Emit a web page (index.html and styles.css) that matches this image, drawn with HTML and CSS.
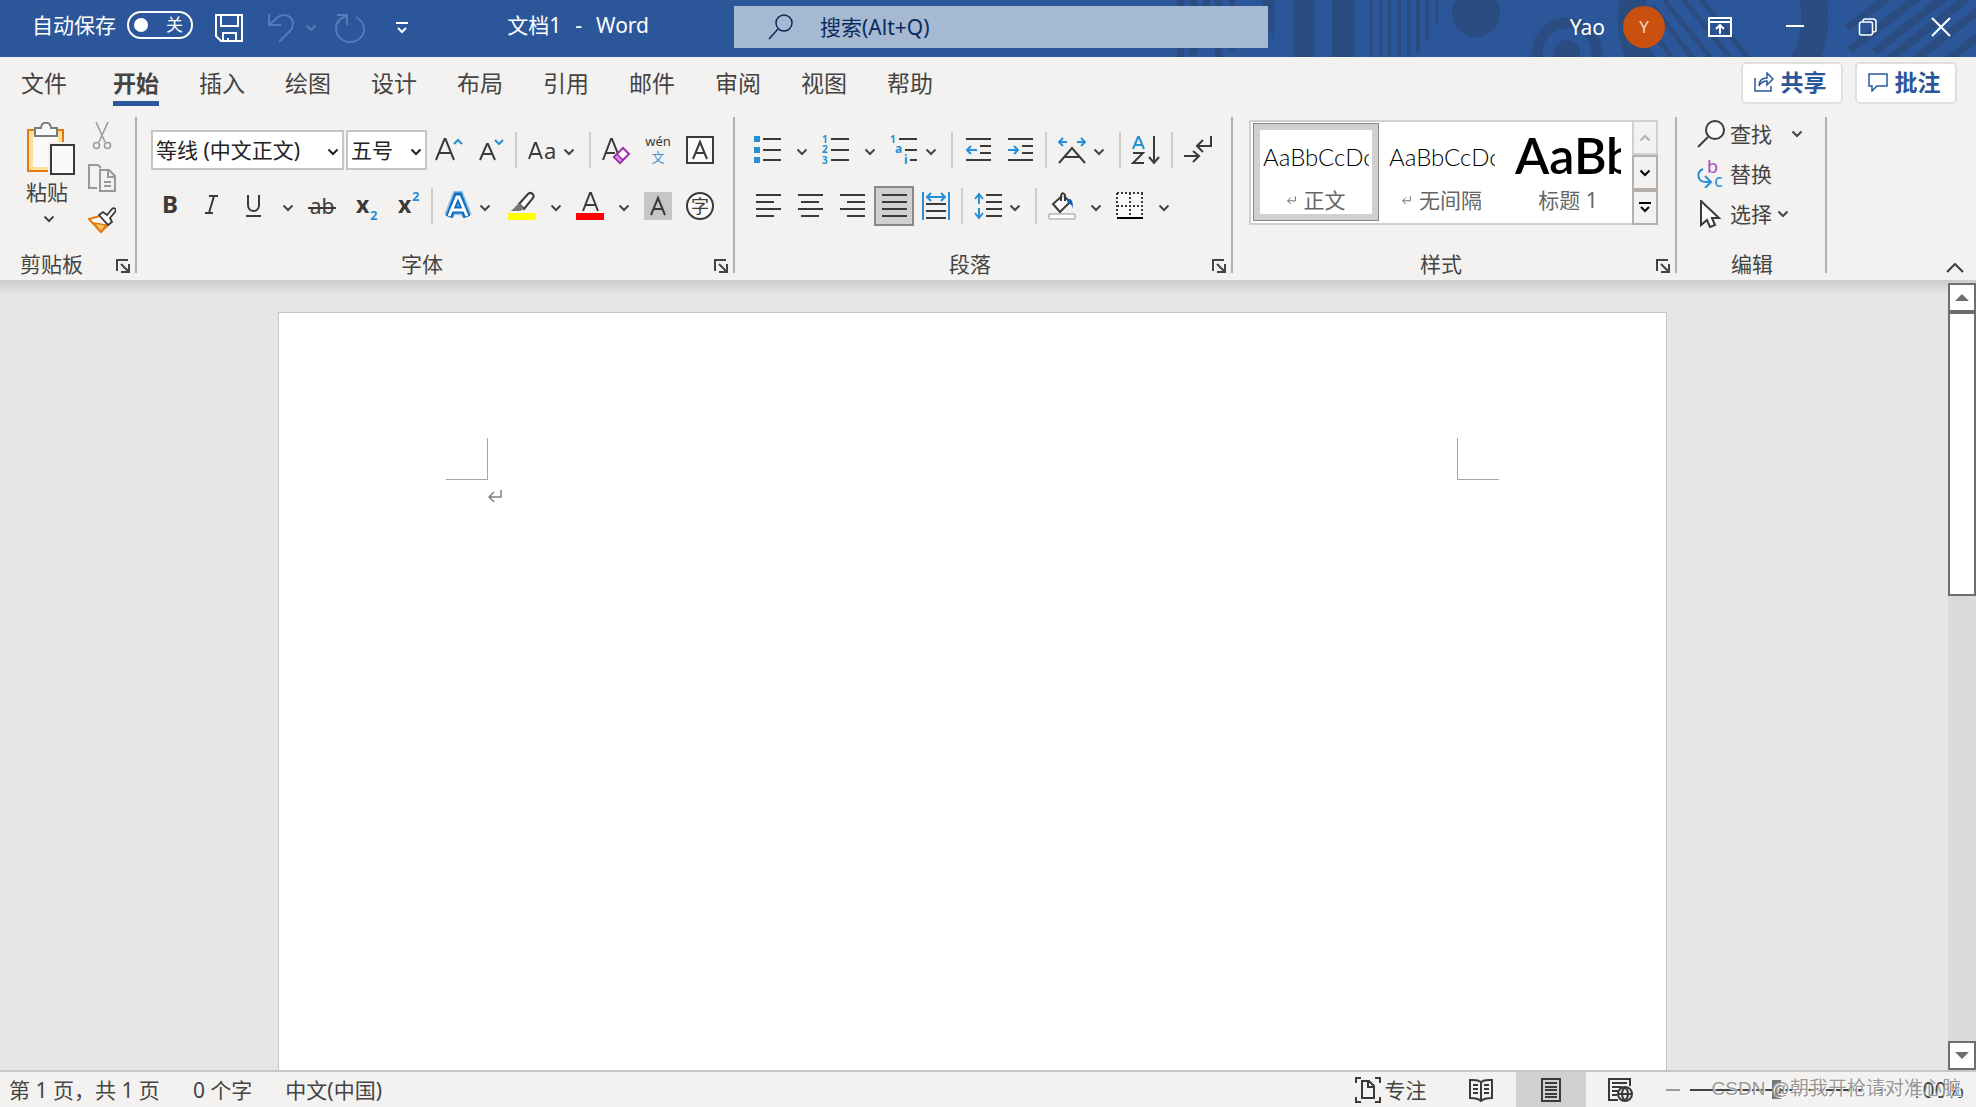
FILE: index.html
```html
<!DOCTYPE html>
<html lang="zh-CN">
<head>
    <meta charset="utf-8">
    <title>文档1 - Word</title>
    <link rel="stylesheet" href="styles.css">
</head>
<body>
    <!-- Shared symbols -->
    <svg class="symbols" aria-hidden="true">
        <symbol id="chevron" viewBox="0 0 12 8"><path d="M1.5 1.5L6 6l4.500-4.500" fill="none" stroke="currentColor" stroke-width="2"/></symbol>
        <symbol id="launcher" viewBox="0 0 14 14"><path d="M1 12V1h11M5 5l7 7M13 5v8H5" fill="none" stroke="currentColor" stroke-width="2"/></symbol>
        <symbol id="return" viewBox="0 0 14 13"><path d="M13 0v7H1M6 2L1 7l5 5" fill="none" stroke="currentColor" stroke-width="1.500"/></symbol>
    </svg>

    <header class="titlebar">
        <svg class="pattern" viewBox="1176 0 800 57" aria-hidden="true">
            <path d="M1177 0h7v57h-7zM1190 0h7v55h-7zM1203 0h7v48h-7zM1215 0h7v57h-7zM1229 0h6v50h-6zM1262 0h12v40l-12-24zM1293 0h21v57h-21zM1332 0h22v57h-22z"/>
            <path d="M1370 0h3v57h-3zM1379 0h3v57h-3zM1388 0h3v57h-3zM1398 0h3v57h-3zM1407 0h3v57h-3zM1416 0h4v52l-4 2zM1425 0h4v39l-4 3zM1435 0h3v23l-3 3z"/>
            <circle cx="1476" cy="13" r="24"/>
            <g fill="none" stroke="#2a4c80">
                <circle cx="1567" cy="53" r="30" stroke-width="11"/>
                <circle cx="1723" cy="18" r="92" stroke-width="27"/>
                <path d="M1640 16l36 46M1652 6l44 56M1664 0l50 62M1682-2l50 62M1700-2l50 62" stroke-width="5"/>
                <path d="M1895-8l-48 36M1922-6l-72 56M1946-4l-72 56M1972-6l-84 66M1990 2l-76 58M1992 26l-44 34" stroke-width="8"/>
            </g>
            <circle cx="1567" cy="53" r="13"/>
        </svg>
        <div class="quick">
            <span>自动保存</span>
            <button class="toggle" aria-label="自动保存"><i></i><span>关</span></button>
            <button class="bare save" aria-label="保存"><svg width="28" height="28" viewBox="0 0 28 28"><path d="M1 1h26v26H6l-5-5zM6 1v11h17V1M8 27v-8h13v8M13 27v-3" fill="none" stroke="#fff" stroke-width="2"/></svg></button>
            <button class="bare faded undo" aria-label="撤消"><svg width="28" height="30" viewBox="0 0 28 30"><path d="M2 1v11h12M2 12L11 4c5-4 14-2 15 6 0 5-2 7-5 10l-9 9" fill="none" stroke="currentColor" stroke-width="2"/></svg><svg width="12" height="8"><use href="#chevron"/></svg></button>
            <button class="bare faded redo" aria-label="恢复"><svg width="30" height="30" viewBox="0 0 30 30"><path d="M2 2h10v10M12 3C4 5 1 10 1 16c0 7 6 13 14 13s14-6 14-13c0-5-3-9-8-12" fill="none" stroke="currentColor" stroke-width="2"/></svg></button>
            <button class="bare" aria-label="自定义快速访问工具栏"><svg width="14" height="12" viewBox="0 0 14 12"><path d="M1 1h12M3 6l4 4 4-4" fill="none" stroke="#fff" stroke-width="2"/></svg></button>
            <h1><span>文档1</span><span>-</span><span>Word</span></h1>
        </div>
        <label class="search">
            <svg width="26" height="26" viewBox="0 0 26 26"><circle cx="16" cy="9" r="8" fill="none" stroke="#0b2a5c" stroke-width="1.500"/><path d="M10 15L1 25" stroke="#0b2a5c" stroke-width="1.500"/></svg>
            <input type="text" placeholder="搜索(Alt+Q)" aria-label="搜索">
        </label>
        <div class="account">
            <span>Yao</span>
            <button class="avatar" aria-label="帐户">Y</button>
            <button class="bare" aria-label="功能区显示选项"><svg width="24" height="20" viewBox="0 0 24 20"><path d="M1 1h22v18H1zM1 5h22M12 17V8M8 12l4-4 4 4" fill="none" stroke="#fff" stroke-width="2"/></svg></button>
            <button class="bare" aria-label="最小化"><svg width="20" height="20" viewBox="0 0 20 20"><path d="M1 9h18" stroke="#fff" stroke-width="2"/></svg></button>
            <button class="bare" aria-label="向下还原"><svg width="20" height="20" viewBox="0 0 20 20"><rect x="1.500" y="5" width="13" height="13" rx="2" fill="none" stroke="#fff" stroke-width="1.500"/><path d="M5 5V4q0-2 2-2h8q3 0 3 3v8q0 2-3 2" fill="none" stroke="#fff" stroke-width="1.500"/></svg></button>
            <button class="bare" aria-label="关闭"><svg width="20" height="20" viewBox="0 0 20 20"><path d="M1 1l18 18M19 1L1 19" stroke="#fff" stroke-width="2"/></svg></button>
        </div>
    </header>

    <nav class="tabs">
        <a href="#" class="file">文件</a>
        <a href="#" class="active">开始</a>
        <a href="#">插入</a>
        <a href="#">绘图</a>
        <a href="#">设计</a>
        <a href="#">布局</a>
        <a href="#">引用</a>
        <a href="#">邮件</a>
        <a href="#">审阅</a>
        <a href="#">视图</a>
        <a href="#">帮助</a>
        <div class="share">
            <button><svg width="20" height="20" viewBox="0 0 20 20"><path d="M1 6v13h16v-5M5 14c0-6 3-8 8-8V1l6 6-6 6V9c-4 0-6 1-8 5z" fill="none" stroke="#2b579a" stroke-width="1.500"/></svg>共享</button>
            <button><svg width="20" height="20" viewBox="0 0 20 20"><path d="M1 2h18v12H9l-5 5v-5H1z" fill="none" stroke="#2b579a" stroke-width="1.500"/></svg>批注</button>
        </div>
    </nav>

    <section class="ribbon">
        <!-- Clipboard -->
        <div class="group clipboard">
            <div class="clip-body">
                <button class="paste">
                    <svg width="50" height="54" viewBox="0 0 50 54"><path d="M2 8h35v41H2z" fill="#fbdf9b" stroke="#e8780a" stroke-width="2"/><path d="M7 13h25v32H7z" fill="#fafafa"/><path d="M9 14V6h6c0-7 10-7 10 0h6v8z" fill="#fafafa" stroke="#7a7a7a" stroke-width="2"/><path d="M22 20h28v34H22z" fill="#f3f2f1"/><path d="M25 23h23v29H25z" fill="#fafafa" stroke="#3b3a39" stroke-width="2"/></svg>
                    <span>粘贴</span>
                    <svg width="12" height="8"><use href="#chevron"/></svg>
                </button>
                <div class="clip-side">
                    <button class="bare" aria-label="剪切"><svg width="28" height="28" viewBox="0 0 28 28"><g fill="none" stroke="#999" stroke-width="1.500"><path d="M8 0l9 20M20 0l-9 20"/><circle cx="8.500" cy="23.500" r="3"/><circle cx="19.500" cy="23.500" r="3"/></g></svg></button>
                    <button class="bare" aria-label="复制"><svg width="28" height="28" viewBox="0 0 28 28"><g fill="none" stroke="#999" stroke-width="2"><path d="M9 24H1V1h9l3 3"/><path d="M12 6h9l6 6v15H12z"/><path d="M20 6v7h7M16 18h7M16 22h7"/></g></svg></button>
                    <button class="bare" aria-label="格式刷"><svg width="28" height="28" viewBox="0 0 28 28"><path d="M12 10L1 13l12 13 9-9z" fill="#fafafa" stroke="#e8780a" stroke-width="2"/><path d="M6 17l12 2-5 7z" fill="#fbc96b" stroke="#e8780a" stroke-width="1.500"/><path d="M11 9l4-3 4 3 5-6c2-2 5 0 3 3l-5 6 2 4-4 3z" fill="#fafafa" stroke="#3b3a39" stroke-width="1.800"/></svg></button>
                </div>
            </div>
            <div class="label">剪贴板<button class="bare" aria-label="剪贴板选项"><svg width="14" height="14"><use href="#launcher"/></svg></button></div>
        </div>

        <!-- Font -->
        <div class="group font">
            <div class="rows">
                <div class="row">
                    <label class="combo name"><select aria-label="字体"><option>等线 (中文正文)</option></select><svg width="12" height="8"><use href="#chevron"/></svg></label>
                    <label class="combo size"><select aria-label="字号"><option>五号</option></select><svg width="12" height="8"><use href="#chevron"/></svg></label>
                    <button class="tool" aria-label="增大字号"><svg viewBox="0 0 28 28"><path d="M2 24L10.500 3h1L20 24M5 17h12" class="ink"/><path d="M20 8l4-4 4 4" class="blue"/></svg></button>
                    <button class="tool" aria-label="减小字号"><svg viewBox="0 0 28 28"><path d="M4 24l7-16h1l7 16M6 18h11" class="ink"/><path d="M19 4l4 4 4-4" class="blue"/></svg></button>
                    <i class="sep"></i>
                    <button class="tool menu" aria-label="更改大小写"><svg viewBox="0 0 28 28"><path d="M1 23L7 7h1l6 16M3 18h9" class="ink"/><text x="16" y="23" font-size="22">a</text></svg><svg class="chev"><use href="#chevron"/></svg></button>
                    <i class="sep"></i>
                    <button class="tool" aria-label="清除所有格式"><svg viewBox="0 0 28 28"><path d="M1 24L9 3h1l6 15M4 17h9" class="ink"/><path d="M12 21l9-9 6 6-9 9z" fill="#fff" stroke="#9b2fae" stroke-width="2"/><path d="M12 21l3-3 6 6-3 3z" fill="#d78fdf" stroke="#9b2fae" stroke-width="1.500"/></svg></button>
                    <button class="tool" aria-label="拼音指南"><svg viewBox="0 0 28 28"><text x="14" y="10" font-size="13" text-anchor="middle">wén</text><text x="14" y="26" font-size="13" text-anchor="middle" fill="#3a96d6">文</text></svg></button>
                    <button class="tool" aria-label="字符边框"><svg viewBox="0 0 28 28"><path d="M1 1h26v26H1z" fill="#fafafa" stroke="#3b3a39" stroke-width="2"/><path d="M7 23l7-17 7 17M9 17h10" class="ink"/></svg></button>
                </div>
                <div class="row">
                    <button class="tool" aria-label="加粗"><svg viewBox="0 0 28 28"><text x="14" y="21" font-size="24" font-weight="700" text-anchor="middle">B</text></svg></button>
                    <button class="tool" aria-label="倾斜"><svg viewBox="0 0 28 28"><path d="M11 4h9M16 4l-5 17M7 21h8" class="ink"/></svg></button>
                    <button class="tool" aria-label="下划线"><svg viewBox="0 0 28 28"><path d="M8 3v10c0 8 11 8 11 0V3M6 24h15" class="ink"/></svg></button>
                    <button class="drop" aria-label="下划线选项"><svg class="chev"><use href="#chevron"/></svg></button>
                    <button class="tool" aria-label="删除线"><svg viewBox="0 0 28 28"><text x="14" y="22" font-size="21" text-anchor="middle">ab</text><path d="M0 16h28" class="ink"/></svg></button>
                    <button class="tool" aria-label="下标"><svg viewBox="0 0 28 28"><text x="6" y="21" font-size="23" font-weight="700">x</text><text x="20" y="28" font-size="13" font-weight="700" fill="#2590d5">2</text></svg></button>
                    <button class="tool" aria-label="上标"><svg viewBox="0 0 28 28"><text x="6" y="21" font-size="23" font-weight="700">x</text><text x="20" y="9" font-size="13" font-weight="700" fill="#2590d5">2</text></svg></button>
                    <i class="sep"></i>
                    <button class="tool menu" aria-label="文本效果"><svg viewBox="0 0 28 28"><path d="M5 24L13 4h2l8 20M8 18h12" fill="none" stroke="#83beec" stroke-width="10"/><path d="M5 25L13 4h2l8 21M8 18h12" fill="none" stroke="#0f6cbd" stroke-width="7"/><path d="M5 24L13 5h2l8 19M8 18h12" fill="none" stroke="#fff" stroke-width="3"/></svg><svg class="chev"><use href="#chevron"/></svg></button>
                    <button class="tool" aria-label="突出显示"><svg viewBox="0 0 28 28"><path d="M0 21h28v7H0z" fill="#ff0"/><path d="M11 12L20 2c3-3 7 1 5 4l-9 11z" fill="#fafafa" stroke="#3b3a39" stroke-width="2"/><path d="M11 11l5 6-4 2H3z" fill="#777"/></svg></button>
                    <button class="drop" aria-label="突出显示颜色"><svg class="chev"><use href="#chevron"/></svg></button>
                    <button class="tool" aria-label="字体颜色"><svg viewBox="0 0 28 28"><path d="M0 21h28v7H0z" fill="red"/><path d="M7 19l7-18h1l7 18M9 13h11" class="ink"/></svg></button>
                    <button class="drop" aria-label="更多字体颜色"><svg class="chev"><use href="#chevron"/></svg></button>
                    <button class="tool" aria-label="字符底纹"><svg viewBox="0 0 28 28"><path d="M0 0h28v28H0z" fill="#c8c6c4"/><path d="M7 23l7-17 7 17M9 17h10" class="ink"/></svg></button>
                    <button class="tool" aria-label="带圈字符"><svg viewBox="0 0 28 28"><circle cx="14" cy="14" r="13" fill="#fafafa" stroke="#3b3a39" stroke-width="2"/><text x="14" y="21" font-size="18" text-anchor="middle">字</text></svg></button>
                </div>
            </div>
            <div class="label">字体<button class="bare" aria-label="字体选项"><svg width="14" height="14"><use href="#launcher"/></svg></button></div>
        </div>

        <!-- Paragraph -->
        <div class="group paragraph">
            <div class="rows">
                <div class="row">
                    <button class="tool" aria-label="项目符号"><svg viewBox="0 0 28 28"><path d="M0 0h6v6H0zM0 11h6v6H0zM0 21h6v6H0z" fill="#2590d5"/><path d="M9 3h18M9 14h18M9 24h18" class="ink"/></svg></button>
                    <button class="drop" aria-label="项目符号库"><svg class="chev"><use href="#chevron"/></svg></button>
                    <button class="tool" aria-label="编号"><svg viewBox="0 0 28 28"><g font-size="10" font-weight="700" fill="#2590d5"><text x="0" y="7">1</text><text x="0" y="17">2</text><text x="0" y="28">3</text></g><path d="M9 3h18M9 14h18M9 24h18" class="ink"/></svg></button>
                    <button class="drop" aria-label="编号库"><svg class="chev"><use href="#chevron"/></svg></button>
                    <button class="tool menu" aria-label="多级列表"><svg viewBox="0 0 28 28"><g font-weight="700" fill="#2590d5"><text x="0" y="7" font-size="10">1</text><text x="5" y="17" font-size="12">a</text><text x="14" y="28" font-size="12">i</text></g><path d="M9 3h18M15 14h12M20 24h7" class="ink"/></svg><svg class="chev"><use href="#chevron"/></svg></button>
                    <i class="sep"></i>
                    <button class="tool" aria-label="减少缩进量"><svg viewBox="0 0 28 28"><path d="M2 3h25M16 10h11M16 17h11M2 24h25" class="ink"/><path d="M13 14H3M7 10l-4 4 4 4" class="blue"/></svg></button>
                    <button class="tool" aria-label="增加缩进量"><svg viewBox="0 0 28 28"><path d="M2 3h25M16 10h11M16 17h11M2 24h25" class="ink"/><path d="M2 14h10M8 10l4 4-4 4" class="blue"/></svg></button>
                    <i class="sep"></i>
                    <button class="tool menu" aria-label="中文版式"><svg viewBox="0 0 28 28"><path d="M1 27l13-15 13 15M6 21h16" class="ink"/><path d="M9 6H1M5 2L1 6l4 4M19 6h8M23 2l4 4-4 4" class="blue"/></svg><svg class="chev"><use href="#chevron"/></svg></button>
                    <i class="sep"></i>
                    <button class="tool" aria-label="排序"><svg viewBox="0 0 28 28"><path d="M1 13L6 1h1l5 12M3 9h7" class="blue"/><path d="M1 17h10L1 27h11M22 0v26M17 21l5 6 5-6" class="ink"/></svg></button>
                    <i class="sep"></i>
                    <button class="tool" aria-label="显示编辑标记"><svg viewBox="0 0 28 28"><path d="M27 0v10H13M19 4l-6 6 6 6M0 20h15M9 15l6 5-6 6" class="ink"/></svg></button>
                </div>
                <div class="row">
                    <button class="tool" aria-label="左对齐"><svg viewBox="0 0 28 28"><path d="M2 3h25M2 10h18M2 17h25M2 24h18" class="ink"/></svg></button>
                    <button class="tool" aria-label="居中"><svg viewBox="0 0 28 28"><path d="M2 3h25M5 10h18M2 17h25M5 24h18" class="ink"/></svg></button>
                    <button class="tool" aria-label="右对齐"><svg viewBox="0 0 28 28"><path d="M2 3h25M9 10h18M2 17h25M9 24h18" class="ink"/></svg></button>
                    <button class="tool pressed" aria-label="两端对齐"><svg viewBox="0 0 28 28"><path d="M2 3h25M2 10h25M2 17h25M2 24h25" class="ink"/></svg></button>
                    <button class="tool" aria-label="分散对齐"><svg viewBox="0 0 28 28"><path d="M4 12h20M4 19h20M4 26h20" class="ink"/><path d="M1 0v28M27 0v28M5 5h18M9 1L5 5l4 4M19 1l4 4-4 4" class="blue"/></svg></button>
                    <i class="sep"></i>
                    <button class="tool menu" aria-label="行距"><svg viewBox="0 0 28 28"><path d="M12 3h16M12 10h16M12 17h16M12 24h16" class="ink"/><path d="M5 12V3M1 7l4-5 4 5M5 16v9M1 21l4 5 4-5" class="blue"/></svg><svg class="chev"><use href="#chevron"/></svg></button>
                    <i class="sep"></i>
                    <button class="tool" aria-label="底纹"><svg viewBox="0 0 28 28"><path d="M1 22h26v5H1z" fill="#fff" stroke="#979593"/><path d="M14 4L5 12l7 8 10-10-6-6" fill="#fff" stroke="#3b3a39" stroke-width="2"/><path d="M13 9V4q1-5 4-1v6" class="ink"/><path d="M19 8c5-3 6 2 6 9-1-5-3-5-5-5z" fill="#1060b0"/></svg></button>
                    <button class="drop" aria-label="底纹颜色"><svg class="chev"><use href="#chevron"/></svg></button>
                    <button class="tool" aria-label="边框"><svg viewBox="0 0 28 28"><path d="M1 1h25v25H1z" fill="#fafafa"/><path d="M1 1h26M1 14h26M1 1v22M14 1v22M26 1v22" fill="none" stroke="#3b3a39" stroke-width="2" stroke-dasharray="2 2"/><path d="M1 26h26" stroke="#000" stroke-width="2"/></svg></button>
                    <button class="drop" aria-label="边框选项"><svg class="chev"><use href="#chevron"/></svg></button>
                </div>
            </div>
            <div class="label">段落<button class="bare" aria-label="段落选项"><svg width="14" height="14"><use href="#launcher"/></svg></button></div>
        </div>

        <!-- Styles -->
        <div class="group styles">
            <div class="gallery">
                <button class="style selected"><span class="sample">AaBbCcDc</span><span class="caption"><svg width="9" height="11"><use href="#return"/></svg>正文</span></button>
                <button class="style"><span class="sample">AaBbCcDc</span><span class="caption"><svg width="9" height="11"><use href="#return"/></svg>无间隔</span></button>
                <button class="style"><span class="sample heading">AaBb</span><span class="caption">标题 1</span></button>
                <div class="scroll">
                    <button class="disabled" aria-label="上一行"><svg class="chev up"><use href="#chevron"/></svg></button>
                    <button aria-label="下一行"><svg class="chev"><use href="#chevron"/></svg></button>
                    <button aria-label="其他"><svg width="12" height="11" viewBox="0 0 12 11"><path d="M0 1h12M2 5l4 4 4-4" fill="none" stroke="#000" stroke-width="2"/></svg></button>
                </div>
            </div>
            <div class="label">样式<button class="bare" aria-label="样式选项"><svg width="14" height="14"><use href="#launcher"/></svg></button></div>
        </div>

        <!-- Editing -->
        <div class="group editing">
            <div class="edit-body">
                <button><svg width="28" height="28" viewBox="0 0 28 28"><circle cx="18" cy="10" r="9" fill="#fafafa" stroke="#3b3a39" stroke-width="2"/><path d="M11 17L1 27" class="ink"/></svg>查找<svg class="chev far"><use href="#chevron"/></svg></button>
                <button><svg width="28" height="28" viewBox="0 0 28 28"><text x="10" y="13" font-size="18" fill="#b146c2">b</text><text x="17" y="27" font-size="18" fill="#2590d5">c</text><path d="M6 9c-7 3-6 13 3 13h5M8 16l6 6-6 6" class="blue"/></svg>替换</button>
                <button><svg width="28" height="28" viewBox="0 0 28 28"><path d="M4 1v24l6-5 3 7 5-2-3-7h7z" fill="#fafafa" stroke="#3b3a39" stroke-width="2"/></svg>选择<svg class="chev"><use href="#chevron"/></svg></button>
            </div>
            <div class="label">编辑</div>
        </div>

        <button class="bare collapse" aria-label="折叠功能区"><svg width="18" height="10" viewBox="0 0 18 10"><path d="M1 9l8-8 8 8" class="ink"/></svg></button>
    </section>

    <main class="workspace">
        <div class="canvas">
            <article class="page">
                <div class="corners"><i class="left"></i><i class="right"></i></div>
                <p><svg width="14" height="13"><use href="#return"/></svg></p>
            </article>
        </div>
        <div class="scrollbar">
            <button aria-label="向上滚动"><svg width="14" height="7" viewBox="0 0 14 7"><path d="M0 7l7-7 7 7z" fill="#6e6e6e"/></svg></button>
            <div class="track"><div class="thumb"></div></div>
            <button aria-label="向下滚动"><svg width="14" height="7" viewBox="0 0 14 7"><path d="M0 0h14L7 7z" fill="#6e6e6e"/></svg></button>
        </div>
    </main>

    <footer class="statusbar">
        <span>第 1 页，共 1 页</span>
        <span>0 个字</span>
        <span>中文(中国)</span>
        <div class="views">
            <button class="focus"><svg width="26" height="26" viewBox="0 0 26 26"><path d="M6 1H1v5M20 1h5v5M1 20v5h5M25 20v5h-5M7 4h7l5 5v12H7zM13 4v6h6" class="ink"/></svg>专注</button>
            <button aria-label="阅读视图"><svg width="26" height="24" viewBox="0 0 26 24"><path d="M13 4C9 1 5 2 2 2v18c4 0 8 0 11 3 3-3 7-3 11-3V2c-3 0-7-1-11 2zM13 4v19M5 7h5M5 11h5M5 15h5M16 7h5M16 11h5M16 15h5" class="ink"/></svg></button>
            <button class="current" aria-label="页面视图"><svg width="20" height="24" viewBox="0 0 20 24"><path d="M1 1h18v22H1zM4 5h12M4 9h12M4 12h12M4 16h12M4 19h12" class="ink"/></svg></button>
            <button aria-label="Web 版式视图"><svg width="26" height="24" viewBox="0 0 26 24"><path d="M22 8V1H1v21h9M4 5h15M4 9h10M4 13h6M4 17h5" class="ink"/><circle cx="17" cy="16" r="7" fill="#f3f2f1" stroke="#3b3a39" stroke-width="2"/><path d="M10 16h14M17 9c-4 4-4 10 0 14M17 9c4 4 4 10 0 14" class="ink"/></svg></button>
        </div>
        <div class="zoom">
            <button class="bare" aria-label="缩小"><svg width="14" height="14"><path d="M0 7h14" stroke="#444" stroke-width="1"/></svg></button>
            <input type="range" min="0" max="100" value="50" aria-label="缩放">
            <button class="bare" aria-label="放大"><svg width="14" height="14"><path d="M2 7h10M7 2v10" stroke="#444" stroke-width="1"/></svg></button>
            <button class="bare percent">100%</button>
        </div>
        <div class="watermark">CSDN @朝我开枪请对准心脏</div>
    </footer>
</body>
</html>
```
FILE: styles.css
```css
* {
    box-sizing: border-box;
}
body {
    margin: 0;
    height: 100vh;
    display: flex;
    flex-direction: column;
    overflow: hidden;
    font-family: "Noto Sans", "Noto Sans CJK SC", sans-serif;
    font-size: 21px;
    line-height: 28px;
    color: #444;
    background: #f3f2f1;
}
button, input, select {
    font: inherit;
    color: inherit;
}
button {
    margin: 0;
    padding: 0;
    border: none;
    background: none;
    display: flex;
    align-items: center;
    justify-content: center;
}
svg {
    display: block;
    flex: none;
}
text {
    fill: #3b3a39;
}
text[fill="#2590d5"], g[fill="#2590d5"] text {
    fill: #2590d5;
}
text[fill="#3a96d6"] {
    fill: #3a96d6;
}
text[fill="#b146c2"] {
    fill: #b146c2;
}
.symbols {
    position: absolute;
    width: 0;
    height: 0;
}
.ink {
    fill: none;
    stroke: #3b3a39;
    stroke-width: 2;
}
.blue {
    fill: none;
    stroke: #2590d5;
    stroke-width: 2;
}
.chev {
    width: 12px;
    height: 8px;
}

/* Title bar */
.titlebar {
    position: relative;
    flex: none;
    height: 57px;
    display: grid;
    grid-template-columns: 734fr 534fr 708fr;
    background: #2b579a;
    color: #fff;
}
.pattern {
    position: absolute;
    top: 0;
    right: 0;
    width: 800px;
    height: 57px;
    fill: #2a4c80;
}
.quick {
    display: flex;
    align-items: center;
    padding: 0 85px 7px 32px;
}
.toggle {
    width: 66px;
    height: 28px;
    margin: 0 22px 0 11px;
    padding: 0 8px 0 5px;
    justify-content: space-between;
    border: 2px solid #fff;
    border-radius: 14px;
    font-size: 17px;
}
.toggle i {
    width: 14px;
    height: 14px;
    border-radius: 50%;
    background: #fff;
}
.quick .bare {
    padding-top: 6px;
}
.faded {
    color: #4f7cbb;
}
.undo {
    margin: 0 18px 0 24px;
    gap: 10px;
}
.redo {
    margin-right: 30px;
}
.quick h1 {
    display: flex;
    gap: 14px;
    margin: 0 0 0 auto;
    font-size: 21px;
    font-weight: 400;
}
.search {
    position: relative;
    display: flex;
    align-items: center;
    gap: 26px;
    height: 42px;
    margin-top: 6px;
    padding-left: 34px;
    background: #a6b9d3;
}
.search input {
    flex: 1;
    min-width: 0;
    padding: 0;
    border: none;
    outline: none;
    background: none;
    color: #0b2a5c;
}
.search input::placeholder {
    color: #0b2a5c;
    opacity: 1;
}
.account {
    position: relative;
    display: flex;
    align-items: center;
    justify-content: flex-end;
    padding: 0 25px 4px 0;
}
.avatar {
    width: 42px;
    height: 42px;
    margin: 0 43px 0 18px;
    border-radius: 50%;
    background: #ca5010;
    color: #f6d5c3;
    font-size: 17px;
}
.account .bare + .bare {
    margin-left: 53px;
}

/* Tabs */
.tabs {
    flex: none;
    display: flex;
    height: 54px;
    padding: 0 19px 0 21px;
    gap: 40px;
    font-size: 23px;
}
.tabs a {
    height: 49px;
    padding-top: 12px;
    color: #444;
    text-decoration: none;
}
.tabs .file {
    margin-right: 6px;
}
.tabs .active {
    border-bottom: 5px solid #2b579a;
    font-weight: 700;
}
.share {
    display: flex;
    gap: 12px;
    margin: 5px 0 0 auto;
}
.share button {
    width: 102px;
    height: 42px;
    gap: 7px;
    padding: 0 4px 2px 0;
    border: 2px solid #e1dfdd;
    border-radius: 5px;
    background: #fff;
    color: #2b579a;
    font-weight: 700;
}

/* Ribbon */
.ribbon {
    flex: none;
    display: flex;
    padding: 6px 0 7px;
}
.group {
    display: flex;
    flex-direction: column;
    justify-content: space-between;
    height: 156px;
    border-right: 2px solid #b3b0ad;
}
.label {
    position: relative;
    padding-right: 26px;
    line-height: 18px;
    text-align: center;
}
.label button {
    position: absolute;
    right: 5px;
    bottom: 0;
}
.clipboard {
    width: 137px;
}
.clipboard .label {
    padding-right: 32px;
}
.clip-body {
    display: flex;
    padding: 5px 0 0 26px;
    gap: 12px;
}
.paste {
    flex-direction: column;
    align-items: flex-start;
    justify-content: flex-start;
    line-height: 32px;
}
.paste svg:last-child {
    margin: 7px 0 0 17px;
}
.clip-side {
    display: flex;
    flex-direction: column;
    gap: 14px;
}
.rows {
    display: flex;
    flex-direction: column;
    gap: 14px;
    padding: 12px 12px 0;
}
.row {
    display: flex;
    align-items: center;
    height: 42px;
}
.tool {
    flex: none;
    width: 42px;
    height: 42px;
}
.tool svg:first-child {
    width: 28px;
    height: 28px;
    overflow: visible;
}
.menu {
    width: 64px;
    gap: 7px;
    padding: 0 10px 0 7px;
}
.tool .chev, .drop .chev {
    margin-top: 4px;
}
.drop {
    width: 26px;
    height: 42px;
}
.sep {
    width: 2px;
    height: 36px;
    margin: 0 4px;
    background: #d0cecc;
}
.pressed {
    width: 40px;
    height: 40px;
    margin: 0 1px;
    border: 2px solid #8a8886;
    background: #d2d0ce;
}
.combo {
    position: relative;
    height: 40px;
    margin-left: 2px;
}
.combo select {
    width: 100%;
    height: 100%;
    padding: 0 3px;
    appearance: none;
    border: 2px solid #c8c6c4;
    border-radius: 0;
    background: #fff;
    color: #222;
}
.combo svg {
    position: absolute;
    right: 5px;
    top: 18px;
    color: #222;
}
.name {
    width: 193px;
}
.size {
    width: 81px;
}

/* Style gallery */
.gallery {
    display: flex;
    margin: 3px 17px 0 16px;
    border: 2px solid #d2d0ce;
    background: #fff;
}
.style {
    flex-direction: column;
    width: 126px;
    height: 98px;
    margin: 1px 0 2px;
    padding: 0 3px;
    border: 7px solid transparent;
}
.style:first-child {
    margin-left: 2px;
}
.selected {
    border: 7px solid #d2d0ce;
    outline: 1px solid #8a8886;
    outline-offset: -1px;
}
.sample {
    width: 106px;
    height: 56px;
    overflow: hidden;
    text-align: left;
    white-space: nowrap;
    font-family: Lato, "Noto Sans CJK SC", sans-serif;
    font-size: 24px;
    font-weight: 300;
    line-height: 54px;
    color: #000;
}
.heading {
    font-size: 50px;
    font-weight: 600;
    line-height: 50px;
}
.caption {
    display: flex;
    align-items: center;
    gap: 8px;
    color: #666;
}
.scroll {
    display: flex;
    flex-direction: column;
    width: 26px;
    margin: -2px -2px -2px 1px;
}
.scroll button {
    flex: 1;
    border: 2px solid #b3b0ad;
    background: #f3f2f1;
    color: #000;
}
.scroll .disabled {
    border-color: #d2d0ce;
    color: #b3b0ad;
}
.up {
    transform: rotate(180deg);
}
.editing {
    width: 150px;
}
.edit-body {
    margin-top: -3px;
}
.edit-body button {
    height: 40px;
    gap: 5px;
    padding-left: 20px;
}
.edit-body .far {
    margin-left: 14px;
}
.editing .label {
    padding: 0 0 0 2px;
}
.collapse {
    align-self: flex-end;
    margin: 0 12px 0 auto;
}

/* Document */
.workspace {
    flex: 1;
    min-height: 0;
    display: flex;
    padding-top: 3px;
    background: linear-gradient(#cbcbcb, #e6e6e6 14px);
}
.canvas {
    flex: 1;
    display: flex;
    padding: 29px 40px 0 36px;
    overflow: hidden;
}
.page {
    width: 100%;
    max-width: 1389px;
    margin: 0 auto;
    padding: 125px 167px;
    border: 1px solid #c6c6c6;
    border-bottom: none;
    background: #fff;
}
.corners {
    display: flex;
    justify-content: space-between;
}
.corners i {
    width: 42px;
    height: 42px;
    border-bottom: 1px solid #a6a6a6;
}
.corners .left {
    border-right: 1px solid #a6a6a6;
}
.corners .right {
    border-left: 1px solid #a6a6a6;
}
.page p {
    margin: 10px 42px;
    color: #808080;
}
.scrollbar {
    display: flex;
    flex-direction: column;
    width: 28px;
    background: #dadada;
}
.scrollbar button {
    height: 29px;
    border: 2px solid #6e6e6e;
    background: #fff;
}
.track {
    flex: 1;
}
.thumb {
    height: 39%;
    border: 2px solid #6e6e6e;
    background: #fff;
}

/* Status bar */
.statusbar {
    position: relative;
    flex: none;
    display: flex;
    align-items: center;
    gap: 33px;
    height: 37px;
    padding-left: 9px;
    border-top: 2px solid #c6c6c6;
}
.views {
    display: flex;
    align-self: stretch;
    margin-left: auto;
}
.views button {
    width: 70px;
}
.views .focus {
    width: auto;
    gap: 4px;
    padding-right: 19px;
}
.current {
    background: #d2d0ce;
}
.zoom {
    display: flex;
    align-items: center;
    gap: 10px;
    padding-right: 12px;
    margin-left: -23px;
}
.zoom input {
    width: 174px;
    height: 20px;
    margin: 0;
    appearance: none;
    background: linear-gradient(#444, #444) center / 100% 2px no-repeat;
}
.zoom input::-webkit-slider-thumb {
    appearance: none;
    width: 9px;
    height: 19px;
    background: #777;
}
.percent {
    margin-left: 13px;
}
.watermark {
    position: absolute;
    right: 15px;
    bottom: 4px;
    font-family: "Liberation Sans", "Noto Sans CJK SC", sans-serif;
    font-size: 19px;
    color: #999;
    text-shadow: 1px 1px #fff;
}
```
